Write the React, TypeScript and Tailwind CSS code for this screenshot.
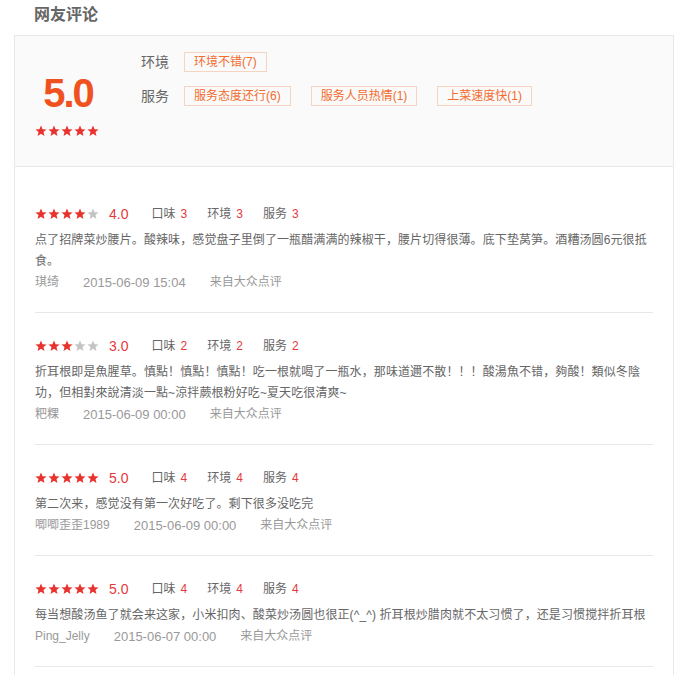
import React from "react";

const FONT = '"Liberation Sans", "Noto Sans CJK SC", sans-serif';

function Star({ on }: { on: boolean }) {
  return (
    <svg width="12" height="12" viewBox="0 0 12 12" className="block">
      <path
        d="M6 0.4 L7.55 4.15 L11.6 4.45 L8.5 7.05 L9.45 11 L6 8.85 L2.55 11 L3.5 7.05 L0.4 4.45 L4.45 4.15 Z"
        fill={on ? "#e8322d" : "#c4c4c4"}
      />
    </svg>
  );
}

function Stars({ n }: { n: number }) {
  return (
    <div className="flex gap-[1px]">
      {[0, 1, 2, 3, 4].map((i) => (
        <Star key={i} on={i < n} />
      ))}
    </div>
  );
}

const reviews = [
  {
    stars: 4,
    rating: "4.0",
    scores: [3, 3, 3],
    text: "点了招牌菜炒腰片。酸辣味，感觉盘子里倒了一瓶醋满满的辣椒干，腰片切得很薄。底下垫莴笋。酒糟汤圆6元很抵食。",
    name: "琪绮",
    date: "2015-06-09 15:04",
  },
  {
    stars: 3,
    rating: "3.0",
    scores: [2, 2, 2],
    text: "折耳根即是魚腥草。慎點！慎點！慎點！吃一根就喝了一瓶水，那味道邇不散！！！酸湯魚不错，夠酸！類似冬陰功，但相對來說清淡一點~涼拌蕨根粉好吃~夏天吃很清爽~",
    name: "粑粿",
    date: "2015-06-09 00:00",
  },
  {
    stars: 5,
    rating: "5.0",
    scores: [4, 4, 4],
    text: "第二次来，感觉没有第一次好吃了。剩下很多没吃完",
    name: "唧唧歪歪1989",
    date: "2015-06-09 00:00",
  },
  {
    stars: 5,
    rating: "5.0",
    scores: [4, 4, 4],
    text: "每当想酸汤鱼了就会来这家，小米扣肉、酸菜炒汤圆也很正(^_^) 折耳根炒腊肉就不太习惯了，还是习惯搅拌折耳根",
    name: "Ping_Jelly",
    date: "2015-06-07 00:00",
  },
];

const labels = ["口味", "环境", "服务"];

function Tag({ children }: { children: React.ReactNode }) {
  return (
    <span className="h-[20px] leading-[18px] px-[9px] border border-[#f6d4c2] text-[#f26c2e] text-[12px] whitespace-nowrap">
      {children}
    </span>
  );
}

export default function App() {
  return (
    <div className="bg-white w-[688px] min-h-[675px]" style={{ fontFamily: FONT }}>
      <div className="h-[30px] leading-[30px] pl-[34px] mb-[5px] text-[16px] font-bold text-[#666]">
        网友评论
      </div>
      <div className="mx-[14px] w-[660px] border border-[#e8e8e8]">
        <div className="h-[131px] bg-[#fafafa] border-b border-[#e8e8e8] flex px-[20px]">
          <div className="w-[64px] flex flex-col items-center pt-[36px]">
            <div className="text-[40px] leading-[42px] font-bold text-[#f0521f] tracking-[-2px] pl-[2px]">
              5.0
            </div>
            <div className="mt-[11px]">
              <Stars n={5} />
            </div>
          </div>
          <div className="ml-[42px] pt-[16px] flex flex-col gap-[14px]">
            <div className="flex items-center h-[20px]">
              <span className="w-[28px] mr-[15px] text-[14px] text-[#666] whitespace-nowrap">环境</span>
              <Tag>环境不错(7)</Tag>
            </div>
            <div className="flex items-center h-[20px]">
              <span className="w-[28px] mr-[15px] text-[14px] text-[#666] whitespace-nowrap">服务</span>
              <div className="flex gap-[20px]">
                <Tag>服务态度还行(6)</Tag>
                <Tag>服务人员热情(1)</Tag>
                <Tag>上菜速度快(1)</Tag>
              </div>
            </div>
          </div>
        </div>
        <div className="px-[20px] pt-[14px] pb-[20px]">
          {reviews.map((r, i) => (
            <div key={i} className="pt-[22px] pb-[19px] border-b border-[#e8e8e8]">
              <div className="h-[22px] flex items-center">
                <Stars n={r.stars} />
                <span className="ml-[10px] text-[14px] text-[#e4393c] leading-[22px]">{r.rating}</span>
                <span className="ml-[23px] flex items-center">
                  {r.scores.map((s, j) => (
                    <span key={j} className={`flex items-center text-[12px] ${j > 0 ? "ml-[20px]" : ""}`}>
                      <span className="text-[#666]">{labels[j]}</span>
                      <span className="ml-[5px] text-[#e4393c]">{s}</span>
                    </span>
                  ))}
                </span>
              </div>
              <p className="mt-[5px] w-[614px] text-[12px] leading-[21px] text-[#666] tracking-[0.1px]">{r.text}</p>
              <div className="h-[21px] flex items-center text-[12px] leading-[21px] text-[#999] overflow-hidden">
                <span>{r.name}</span>
                <span className="ml-[24px] text-[13px] leading-[21px]">{r.date}</span>
                <span className="ml-[24px]">来自大众点评</span>
              </div>
            </div>
          ))}
        </div>
      </div>
    </div>
  );
}
